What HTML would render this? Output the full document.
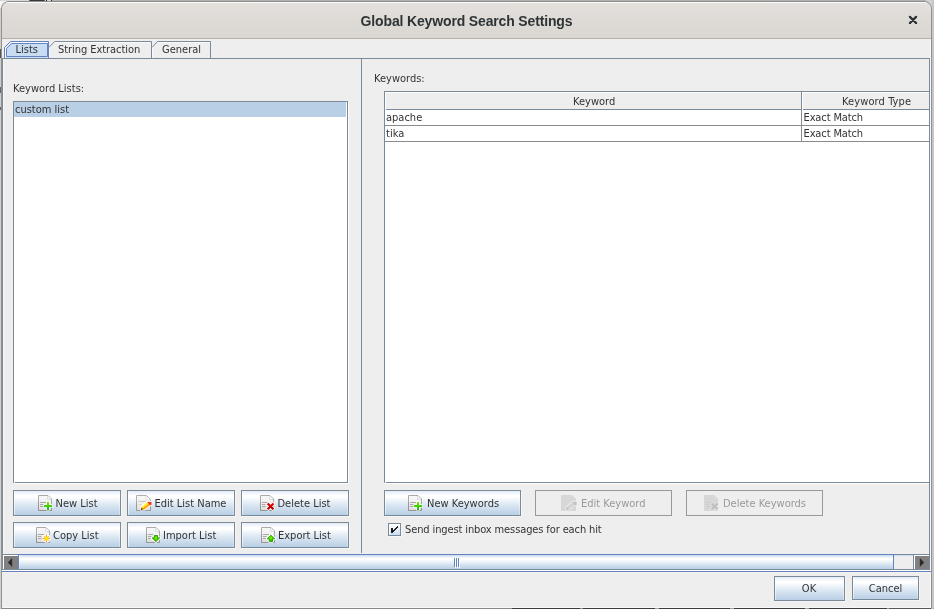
<!DOCTYPE html>
<html>
<head>
<meta charset="utf-8">
<title>Global Keyword Search Settings</title>
<style>
html,body{margin:0;padding:0;}
body{width:934px;height:609px;overflow:hidden;position:relative;background:#f4f4f4;
  font-family:"DejaVu Sans Condensed","Liberation Sans",sans-serif;font-size:11px;color:#333;}
.abs{position:absolute;}
#win{position:absolute;left:1px;top:1px;width:931px;height:608px;background:#eeeeee;
  border-radius:8px 8px 0 0;box-sizing:border-box;border:1px solid #929090;border-top-color:#8e8c8a;border-bottom-color:transparent;overflow:hidden;}
#title{position:absolute;left:0;top:0;width:929px;height:37px;
  background:linear-gradient(#e3e0dd 0%,#dfdcd8 40%,#dad6d2 100%);border-top:1px solid #fcfbfa;box-sizing:border-box;
  border-bottom:1px solid #b9b1a9;}
#title .t{will-change:transform;transform:scale(1,1.075);transform-origin:50% 14.5px;position:absolute;left:0;width:929px;top:9px;text-align:center;font-family:"Liberation Sans","DejaVu Sans",sans-serif;
  font-weight:bold;font-size:14px;color:#2e3436;letter-spacing:-0.15px;line-height:18px;}
.lbl{position:absolute;white-space:nowrap;line-height:13px;}
.btn{position:absolute;box-sizing:border-box;border:1px solid #7a8a99;height:26px;
  background:linear-gradient(#e3ecf6 0%,#ffffff 19%,#ffffff 25%,#dde8f3 56%,#b8cfe5 100%);
  box-shadow:inset 1px 0 0 rgba(255,255,255,.55),inset -1px 0 0 rgba(255,255,255,.35),1px 1px 0 rgba(255,255,255,.45);}
.btn.dis{background:#eeeeee;border-color:#999;color:#999;box-shadow:none;}
.btn .c{position:absolute;left:0;right:0;top:0;bottom:0;display:flex;align-items:center;justify-content:center;white-space:nowrap;}
.btn svg{position:absolute;width:16px;height:16px;overflow:visible;}
.btn span{position:absolute;white-space:nowrap;line-height:13px;}
</style>
</head>
<body>
<!-- bits of background windows peeking around the frame -->
<div class="abs" style="left:0;top:8px;width:1px;height:601px;background:#cfcfcf"></div>
<div class="abs" style="left:0;top:0;width:934px;height:1px;background:linear-gradient(90deg,#d8d8d8 0,#d8d8d8 52px,#b2b2b2 52px,#b2b2b2 926px,#d2d2d2 926px)"></div>
<div class="abs" style="left:29px;top:0;width:16px;height:1px;background:#3a3a3a;border-left:1px solid #5a6a80;border-right:1px solid #5a6a80;box-sizing:border-box"></div>
<div class="abs" style="left:46px;top:0;width:1px;height:1px;background:#222"></div>
<div class="abs" style="left:51px;top:0;width:1px;height:1px;background:#222"></div>
<div class="abs" style="left:926px;top:0;width:8px;height:8px;background:#d2d2d2"></div><div class="abs" style="left:932px;top:0;width:2px;height:609px;background:#c6c6c6"></div>


<div class="abs" style="left:0;top:49px;width:1px;height:9px;background:#555"></div><div class="abs" style="left:0;top:87px;width:1px;height:6px;background:#666"></div><div class="abs" style="left:0;top:107px;width:1px;height:3px;background:#666"></div>
<div id="win">
  <div id="title"><div class="t">Global Keyword Search Settings</div>
    <svg class="abs" style="left:906px;top:12px" width="10" height="11" viewBox="0 0 10 11"><path d="M1.9 2.9 L8.1 9.1 M8.1 2.9 L1.9 9.1" stroke="#ffffff" stroke-opacity=".75" stroke-width="2" stroke-linecap="round" fill="none"/><path d="M1.9 1.9 L8.1 8.1 M8.1 1.9 L1.9 8.1" stroke="#2e3436" stroke-width="2.3" stroke-linecap="round" fill="none"/></svg>
  </div>
</div>

<div class="abs" style="left:0;top:608px;width:934px;height:1px;background:linear-gradient(90deg,#d0d0d0 0,#d0d0d0 1px,#8a8a8a 1px,#8a8a8a 512px,#3a3d40 512px,#3a3d40 580px,#8a8a8a 580px,#8a8a8a 583px,#3a3d40 583px,#3a3d40 655px,#a0a0a0 655px,#a0a0a0 659px,#3a3d40 659px,#3a3d40 730px,#a0a0a0 730px,#a0a0a0 734px,#3a3d40 734px,#3a3d40 805px,#a0a0a0 805px,#a0a0a0 809px,#3a3d40 809px,#3a3d40 887px,#a0a0a0 887px,#a0a0a0 889px,#55585b 889px,#55585b 931px,#b0b0b0 931px)"></div>
<!-- everything below is positioned in page coordinates -->
<div id="ui" class="abs" style="left:0;top:0;width:934px;height:609px;will-change:transform;">

  <!-- tabbed pane content border -->
  <div class="abs" style="left:2px;top:58px;width:928px;height:512px;box-sizing:border-box;border:1px solid #7a8a99;border-bottom:none;border-right:none"></div>
  
  <!-- tabs -->
  <svg class="abs" style="left:0;top:38px" width="220" height="22" viewBox="0 0 220 22">
    <!-- selected tab -->
    <path d="M4.5 20 V9.5 L10.5 3.5 H48.5 V20 Z" fill="#c8ddf2" stroke="none"/>
    <path d="M5.5 20 V10 L11 4.5 H47.5" fill="none" stroke="#ffffff" stroke-width="1"/>
    <path d="M4.5 20 V9.5 L10.5 3.5 H48.5 V20" fill="none" stroke="#6382bf" stroke-width="1"/>
    <path d="M6.5 18.5 V10.5 L11.5 5.5 H47.5 V18.5 Z" fill="#c8ddf2" stroke="#6382bf" stroke-width="1"/>
    <!-- tab 2 -->
    <path d="M49 9.5 L54.5 3.5 H151.5 V20" fill="none" stroke="#7a8a99" stroke-width="1"/>
    <path d="M55 4.5 H151 M49.5 9.5 V19.5" fill="none" stroke="#ffffff" stroke-opacity=".7" stroke-width="1"/>
    <!-- tab 3 -->
    <path d="M152 9.5 L157.5 3.5 H210.5 V20" fill="none" stroke="#7a8a99" stroke-width="1"/>
    <path d="M158 4.5 H210 M152.5 9.5 V19.5" fill="none" stroke="#ffffff" stroke-opacity=".7" stroke-width="1"/>
  </svg>
  <div class="lbl" style="left:15.5px;top:43px;">Lists</div>
  <div class="lbl" style="left:58px;top:43px;letter-spacing:-0.06px">String Extraction</div>
  <div class="lbl" style="left:162px;top:43px;">General</div>

  <!-- split divider -->
  <div class="abs" style="left:361px;top:59px;width:1px;height:494px;background:#7a8a99"></div>

  <!-- left panel -->
  <div class="lbl" style="left:13px;top:82px;">Keyword Lists:</div>
  <div class="abs" style="left:13px;top:101px;width:335px;height:382px;box-sizing:border-box;border:1px solid #7a8a99;background:#fff;box-shadow:1px 1px 0 #fff"></div>
  <div class="abs" style="left:14px;top:482px;width:1px;height:1px;background:#fff"></div>
  <div class="abs" style="left:14px;top:102px;width:332px;height:15px;background:#b8cfe5"></div>
  <div class="lbl" style="left:15px;top:103px;">custom list</div>


  <div class="btn" style="left:13px;top:490px;width:108px;height:26px"><svg viewBox="0 0 16 16" style="left:24px;top:4px"><use href="#doc"/><use href="#plus"/></svg><span style="left:41.5px;top:6px">New List</span></div>
  <div class="btn" style="left:127px;top:490px;width:108px;height:26px"><svg viewBox="0 0 16 16" style="left:8px;top:4px"><use href="#doce"/><use href="#pencil"/></svg><span style="left:26.5px;top:6px">Edit List Name</span></div>
  <div class="btn" style="left:241px;top:490px;width:108px;height:26px"><svg viewBox="0 0 16 16" style="left:18px;top:4px"><use href="#doc"/><use href="#cross"/></svg><span style="left:35.5px;top:6px">Delete List</span></div>
  <div class="btn" style="left:13px;top:522px;width:108px;height:26px"><svg viewBox="0 0 16 16" style="left:22px;top:4px"><use href="#doc"/><use href="#star"/></svg><span style="left:39px;top:6px">Copy List</span></div>
  <div class="btn" style="left:127px;top:522px;width:108px;height:26px"><svg viewBox="0 0 16 16" style="left:18px;top:4px"><use href="#doc"/><use href="#down"/></svg><span style="left:35px;top:6px">Import List</span></div>
  <div class="btn" style="left:241px;top:522px;width:108px;height:26px"><svg viewBox="0 0 16 16" style="left:19px;top:4px"><use href="#doc"/><use href="#up"/></svg><span style="left:36px;top:6px">Export List</span></div>

  <!-- right panel -->
  <div class="lbl" style="left:374px;top:72px;">Keywords:</div>
  <div class="abs" style="left:384px;top:91px;width:545px;height:392px;box-sizing:border-box;border:1px solid #7a8a99;border-right:none;background:#fff;box-shadow:0 1px 0 #fff"></div>
  <div class="abs" style="left:385px;top:482px;width:1px;height:1px;background:#fff"></div>
  <!-- header -->
  <div class="abs" style="left:386px;top:93px;width:543px;height:16px;background:#eeeeee"></div>
  <div class="abs" style="left:386px;top:109px;width:543px;height:1px;background:#7a8a99"></div>
  <div class="abs" style="left:385px;top:125px;width:544px;height:1px;background:#8c8c8c"></div>
  <div class="abs" style="left:385px;top:141px;width:544px;height:1px;background:#8c8c8c"></div>
  <div class="abs" style="left:801px;top:110px;width:1px;height:32px;background:#8c8c8c"></div>
  <div class="abs" style="left:801px;top:92px;width:1px;height:18px;background:#7a8a99"></div>
  <div class="abs" style="left:802px;top:92px;width:1px;height:18px;background:#fff"></div>
  <div class="lbl" style="left:573px;top:95px;">Keyword</div>
  <div class="lbl" style="left:842px;top:95px;letter-spacing:0.1px">Keyword Type</div>
  <div class="lbl" style="left:386px;top:111px;">apache</div>
  <div class="lbl" style="left:386px;top:127px;">tika</div>
  <div class="lbl" style="left:803.5px;top:111px;letter-spacing:-0.12px">Exact Match</div>
  <div class="lbl" style="left:803.5px;top:127px;letter-spacing:-0.12px">Exact Match</div>


  <div class="btn" style="left:384px;top:490px;width:137px;height:26px"><svg viewBox="0 0 16 16" style="left:23px;top:4px"><use href="#doc"/><use href="#plus"/></svg><span style="left:42px;top:6px">New Keywords</span></div>
  <div class="btn dis" style="left:535px;top:490px;width:137px;height:26px"><svg viewBox="0 0 16 16" style="left:25px;top:4px"><use href="#docg"/><use href="#gpencil"/></svg><span style="left:45px;top:6px">Edit Keyword</span></div>
  <div class="btn dis" style="left:686px;top:490px;width:137px;height:26px"><svg viewBox="0 0 16 16" style="left:17px;top:4px"><use href="#docg"/><use href="#gcross"/></svg><span style="left:36px;top:6px">Delete Keywords</span></div>

  <!-- checkbox -->
  <div class="abs" style="left:388px;top:523px;width:13px;height:13px;box-sizing:border-box;border:1px solid #7a8a99;background:linear-gradient(#ffffff 0%,#eef4fa 35%,#c8ddf2 100%);box-shadow:inset 1px 1px 0 rgba(255,255,255,.7),1px 1px 0 rgba(255,255,255,.5)"></div>
  <svg class="abs" style="left:388px;top:523px" width="13" height="13" viewBox="0 0 13 13" shape-rendering="crispEdges"><g fill="#1e1e1e"><rect x="3" y="5" width="2" height="5"/><rect x="9" y="3" width="1" height="2"/><rect x="8" y="4" width="1" height="2"/><rect x="7" y="5" width="1" height="2"/><rect x="6" y="6" width="1" height="2"/><rect x="5" y="7" width="1" height="2"/></g></svg>
  <div class="lbl" style="left:405px;top:523px;letter-spacing:-0.115px">Send ingest inbox messages for each hit</div>

  <!-- horizontal scrollbar -->
  <div class="abs" style="left:3px;top:554px;width:926px;height:1px;background:#7a8a99"></div>
  <div class="abs" style="left:3px;top:555px;width:926px;height:14px;background:#eeeeee"></div>
  <div class="abs" style="left:3px;top:555px;width:15px;height:15px;background:#fff"></div>
  <div class="abs" style="left:4px;top:556px;width:14px;height:13px;background:#808080;"></div>
  <svg class="abs" style="left:4px;top:556px" width="14" height="13" viewBox="0 0 14 13"><path d="M8.2 2 L3.8 6.5 L8.2 11 Z" fill="#2b2b2b"/></svg>
  <div class="abs" style="left:894px;top:555px;width:19px;height:1px;background:#c8ddf2"></div>
  <div class="abs" style="left:18px;top:554px;width:876px;height:16px;box-sizing:border-box;border:1px solid #6382bf;border-bottom-color:#7a8a99;
     background:linear-gradient(#c9dcef 0%,#ffffff 26%,#ffffff 32%,#dde8f3 62%,#b8cfe5 100%);"></div>
  <div class="abs" style="left:19px;top:555px;width:1px;height:14px;background:linear-gradient(rgba(255,255,255,.8),rgba(255,255,255,.25))"></div>
  <div class="abs" style="left:455px;top:559px;width:1px;height:9px;background:#fff"></div>
  <div class="abs" style="left:457px;top:559px;width:1px;height:9px;background:#fff"></div>
  <div class="abs" style="left:459px;top:559px;width:1px;height:9px;background:#fff"></div>
  <div class="abs" style="left:454px;top:558px;width:1px;height:9px;background:#6382bf"></div>
  <div class="abs" style="left:456px;top:558px;width:1px;height:9px;background:#6382bf"></div>
  <div class="abs" style="left:458px;top:558px;width:1px;height:9px;background:#6382bf"></div>
  <div class="abs" style="left:913px;top:555px;width:1px;height:14px;background:#7a8a99"></div>
  <div class="abs" style="left:914px;top:555px;width:15px;height:14px;background:#fff"></div>
  <div class="abs" style="left:915px;top:556px;width:14px;height:13px;background:#808080;"></div>
  <svg class="abs" style="left:915px;top:556px" width="14" height="13" viewBox="0 0 14 13"><path d="M4.8 2 L9.2 6.5 L4.8 11 Z" fill="#2b2b2b"/></svg>
  <div class="abs" style="left:3px;top:569px;width:926px;height:1px;background:#7a8a99"></div>
  <div class="abs" style="left:2px;top:570px;width:929px;height:1px;background:#fdfdfd"></div>
  <div class="abs" style="left:929px;top:58px;width:1px;height:512px;background:#7a8a99"></div>
  <div class="abs" style="left:2px;top:571px;width:929px;height:1px;background:#6382bf"></div>
  <div class="abs" style="left:2px;top:572px;width:929px;height:1px;background:#f4f3f1"></div>
  <!-- window inner highlights -->
  <div class="abs" style="left:930px;top:39px;width:1px;height:532px;background:#f8f8f8"></div>
  <div class="abs" style="left:930px;top:572px;width:1px;height:36px;background:#f8f8f8"></div>
  <div class="abs" style="left:2px;top:607px;width:929px;height:1px;background:#f8f8f8"></div>
  <div class="abs" style="left:3px;top:59px;width:1px;height:495px;background:#f8f8f8"></div>

  <!-- OK / Cancel -->
  <div class="btn" style="left:774px;top:576px;width:71px;height:25px"><div class="c" style="left:-1px">OK</div></div>
  <div class="btn" style="left:852px;top:576px;width:67px;height:24px"><div class="c">Cancel</div></div>
</div>

<svg width="0" height="0" style="position:absolute">
  <defs>
    <linearGradient id="gdoc" x1="0" y1="0" x2="0" y2="1"><stop offset="0" stop-color="#f8f8f8"/><stop offset=".5" stop-color="#f0f0f0"/><stop offset="1" stop-color="#dcdcdc"/></linearGradient>
    <linearGradient id="ggreen" x1="0" y1="0" x2="0" y2="1"><stop offset="0" stop-color="#86e000"/><stop offset=".5" stop-color="#3fd400"/><stop offset="1" stop-color="#14b51e"/></linearGradient>
    <linearGradient id="gred" gradientUnits="userSpaceOnUse" x1="0" y1="8" x2="0" y2="15"><stop offset="0" stop-color="#f00000"/><stop offset="1" stop-color="#a80000"/></linearGradient>
    <radialGradient id="garrow" cx=".5" cy=".4" r=".6"><stop offset="0" stop-color="#8cf000"/><stop offset=".6" stop-color="#3fd000"/><stop offset="1" stop-color="#1fae00"/></radialGradient>
    <g id="doc">
      <path d="M0.5 0.5 H10 L13.5 4 V15.5 H0.5 Z" fill="url(#gdoc)" stroke="#aaaaaa" stroke-width="1"/>
      <path d="M0.5 7 V15.5 H13.5 V12" fill="none" stroke="#959595" stroke-width="1"/>
      <path d="M9.7 1 V4.3 H13" fill="#ffffff" stroke="#d2d2d2" stroke-width=".8"/>
      <path d="M2 7.5 H8 M2 9.5 H5.5 M2 11.5 H5.5" stroke="#a8a8a8" stroke-width="1"/>
    </g>
    <g id="docg">
      <path d="M0 0 H10.2 L14 3.8 V16 H0 Z" fill="#d7d7d7" stroke="none"/>
      <path d="M10 1 V4 H13" fill="#dedede" stroke="none"/>
    </g>
    <g id="plus">
      <path d="M10 6.6 V15.4 M5.6 11 H14.4" stroke="#ffffff" stroke-width="3.4" stroke-linecap="butt" stroke-opacity=".9"/>
      <path d="M9 7 H11 V10 H14 V12 H11 V15 H9 V12 H6 V10 H9 Z" fill="url(#ggreen)"/>
    </g>
    <g id="cross">
      <path d="M8.4 9.3 L12.7 13.5 M12.7 9.3 L8.4 13.5" stroke="#ffffff" stroke-width="3.8" stroke-linecap="square" stroke-opacity=".9"/>
      <path d="M8.4 9.3 L12.7 13.5 M12.7 9.3 L8.4 13.5" stroke="url(#gred)" stroke-width="2.2" stroke-linecap="square"/>
    </g>
    <g id="gcross">
      <path d="M8.4 9.3 L12.7 13.5 M12.7 9.3 L8.4 13.5" stroke="#e2e2e2" stroke-width="3.6" stroke-linecap="square"/><path d="M8.4 9.3 L12.7 13.5 M12.7 9.3 L8.4 13.5" stroke="#bebebe" stroke-width="2.1" stroke-linecap="square"/>
      <path d="M2 7.5 H7 M2 9.5 H5.5 M2 11.5 H6" stroke="#cccccc" stroke-width="1"/>
    </g>
    <g id="star">
      <circle cx="10.5" cy="11.4" r="4.3" fill="#ffffff" fill-opacity=".95"/>
      <path d="M10.5 7.6 V15.2 M6.7 11.4 H14.3" stroke="#ff8f1f" stroke-width="1"/>
      <path d="M8.2 9.1 L12.8 13.7 M12.8 9.1 L8.2 13.7" stroke="#ff8f1f" stroke-width="1" stroke-dasharray="1 4.5 1 10"/>
      <circle cx="10.5" cy="11.4" r="1.9" fill="#fff000" stroke="#ffc400" stroke-width=".6"/>
    </g>
    <g id="down">
      <path d="M8.3 8.5 H11.5 V10.9 H13.6 L9.9 14.5 L6.2 10.9 H8.3 Z" fill="#ffffff" stroke="#ffffff" stroke-width="2.8" stroke-linejoin="round" stroke-opacity=".92"/>
      <path d="M8.3 8.5 H11.5 V10.9 H13.6 L9.9 14.5 L6.2 10.9 H8.3 Z" fill="url(#garrow)" stroke="#27a500" stroke-width="1" stroke-linejoin="round"/>
    </g>
    <g id="up">
      <path d="M8.3 14.4 H11.5 V11.8 H13.6 L9.9 8.3 L6.2 11.8 H8.3 Z" fill="#ffffff" stroke="#ffffff" stroke-width="2.8" stroke-linejoin="round" stroke-opacity=".92"/>
      <path d="M8.3 14.4 H11.5 V11.8 H13.6 L9.9 8.3 L6.2 11.8 H8.3 Z" fill="url(#garrow)" stroke="#27a500" stroke-width="1" stroke-linejoin="round"/>
    </g>
    <g id="doce">
      <path d="M0.5 0.5 H10.5 L14.5 4.5 V15.5 H0.5 Z" fill="url(#gdoc)" stroke="#b0b0b0" stroke-width="1"/>
      <path d="M0.5 7 V15.5 H14.5 V12" fill="none" stroke="#9c9c9c" stroke-width="1"/>
      <path d="M10.2 1 V4.8 H14" fill="#ffffff" stroke="#d8d8d8" stroke-width=".8"/>
      <path d="M2.5 6.5 H10" stroke="#cfc6b4" stroke-width="1.2"/>
      <path d="M2.5 9.5 H6" stroke="#dcd8d0" stroke-width="1"/>
    </g>
    <g id="pencil">
      <path d="M4.6 14.8 L5.4 11.8 L11.4 6.6 L15.6 6.8 L15.6 10 L13.6 10.6 L8.4 14.6 Z" fill="#ffffff" stroke="#ffffff" stroke-width="1.6" stroke-linejoin="round" stroke-opacity=".95"/>
      <path d="M5.6 12 L11.3 7.2 L12.8 8.8 L6.8 13.2 Z" fill="#fff000"/>
      <path d="M6.8 13.2 L12.8 8.8 L13.9 10.2 L8.2 14.4 Z" fill="#ff9a10"/>
      <path d="M11.3 7.2 L11.9 6.7 L15.6 6.9 L15.5 9.9 L13.9 10.3 Z" fill="#f23a28"/>
      <path d="M4.7 14.7 L5.6 12 L8.2 14.4 Z" fill="#b8860b"/>
      <path d="M4.7 14.7 L5.2 13.2 L6.6 14.5 Z" fill="#201000"/>
    </g>
    <g id="gpencil">
      <path d="M10 0 H11 L15 4 V16 H10 Z" fill="#d7d7d7"/>
      <path d="M4.6 14.8 L5.4 11.8 L11.4 6.6 L15.6 6.8 L15.6 10 L13.6 10.6 L8.4 14.6 Z" fill="#e9e9e9" stroke="#e9e9e9" stroke-width="1.5" stroke-linejoin="round"/>
      <path d="M5.6 12 L11.3 7.2 L13.9 10.2 L8.2 14.4 Z" fill="#d4d4d4"/>
      <path d="M11.3 7.2 L11.9 6.7 L15.6 6.9 L15.5 9.9 L13.9 10.3 Z" fill="#c2c2c2"/>
      <path d="M4.7 14.7 L5.6 12 L8.2 14.4 Z" fill="#bdbdbd"/>
    </g>
  </defs>
</svg>
</body>
</html>
